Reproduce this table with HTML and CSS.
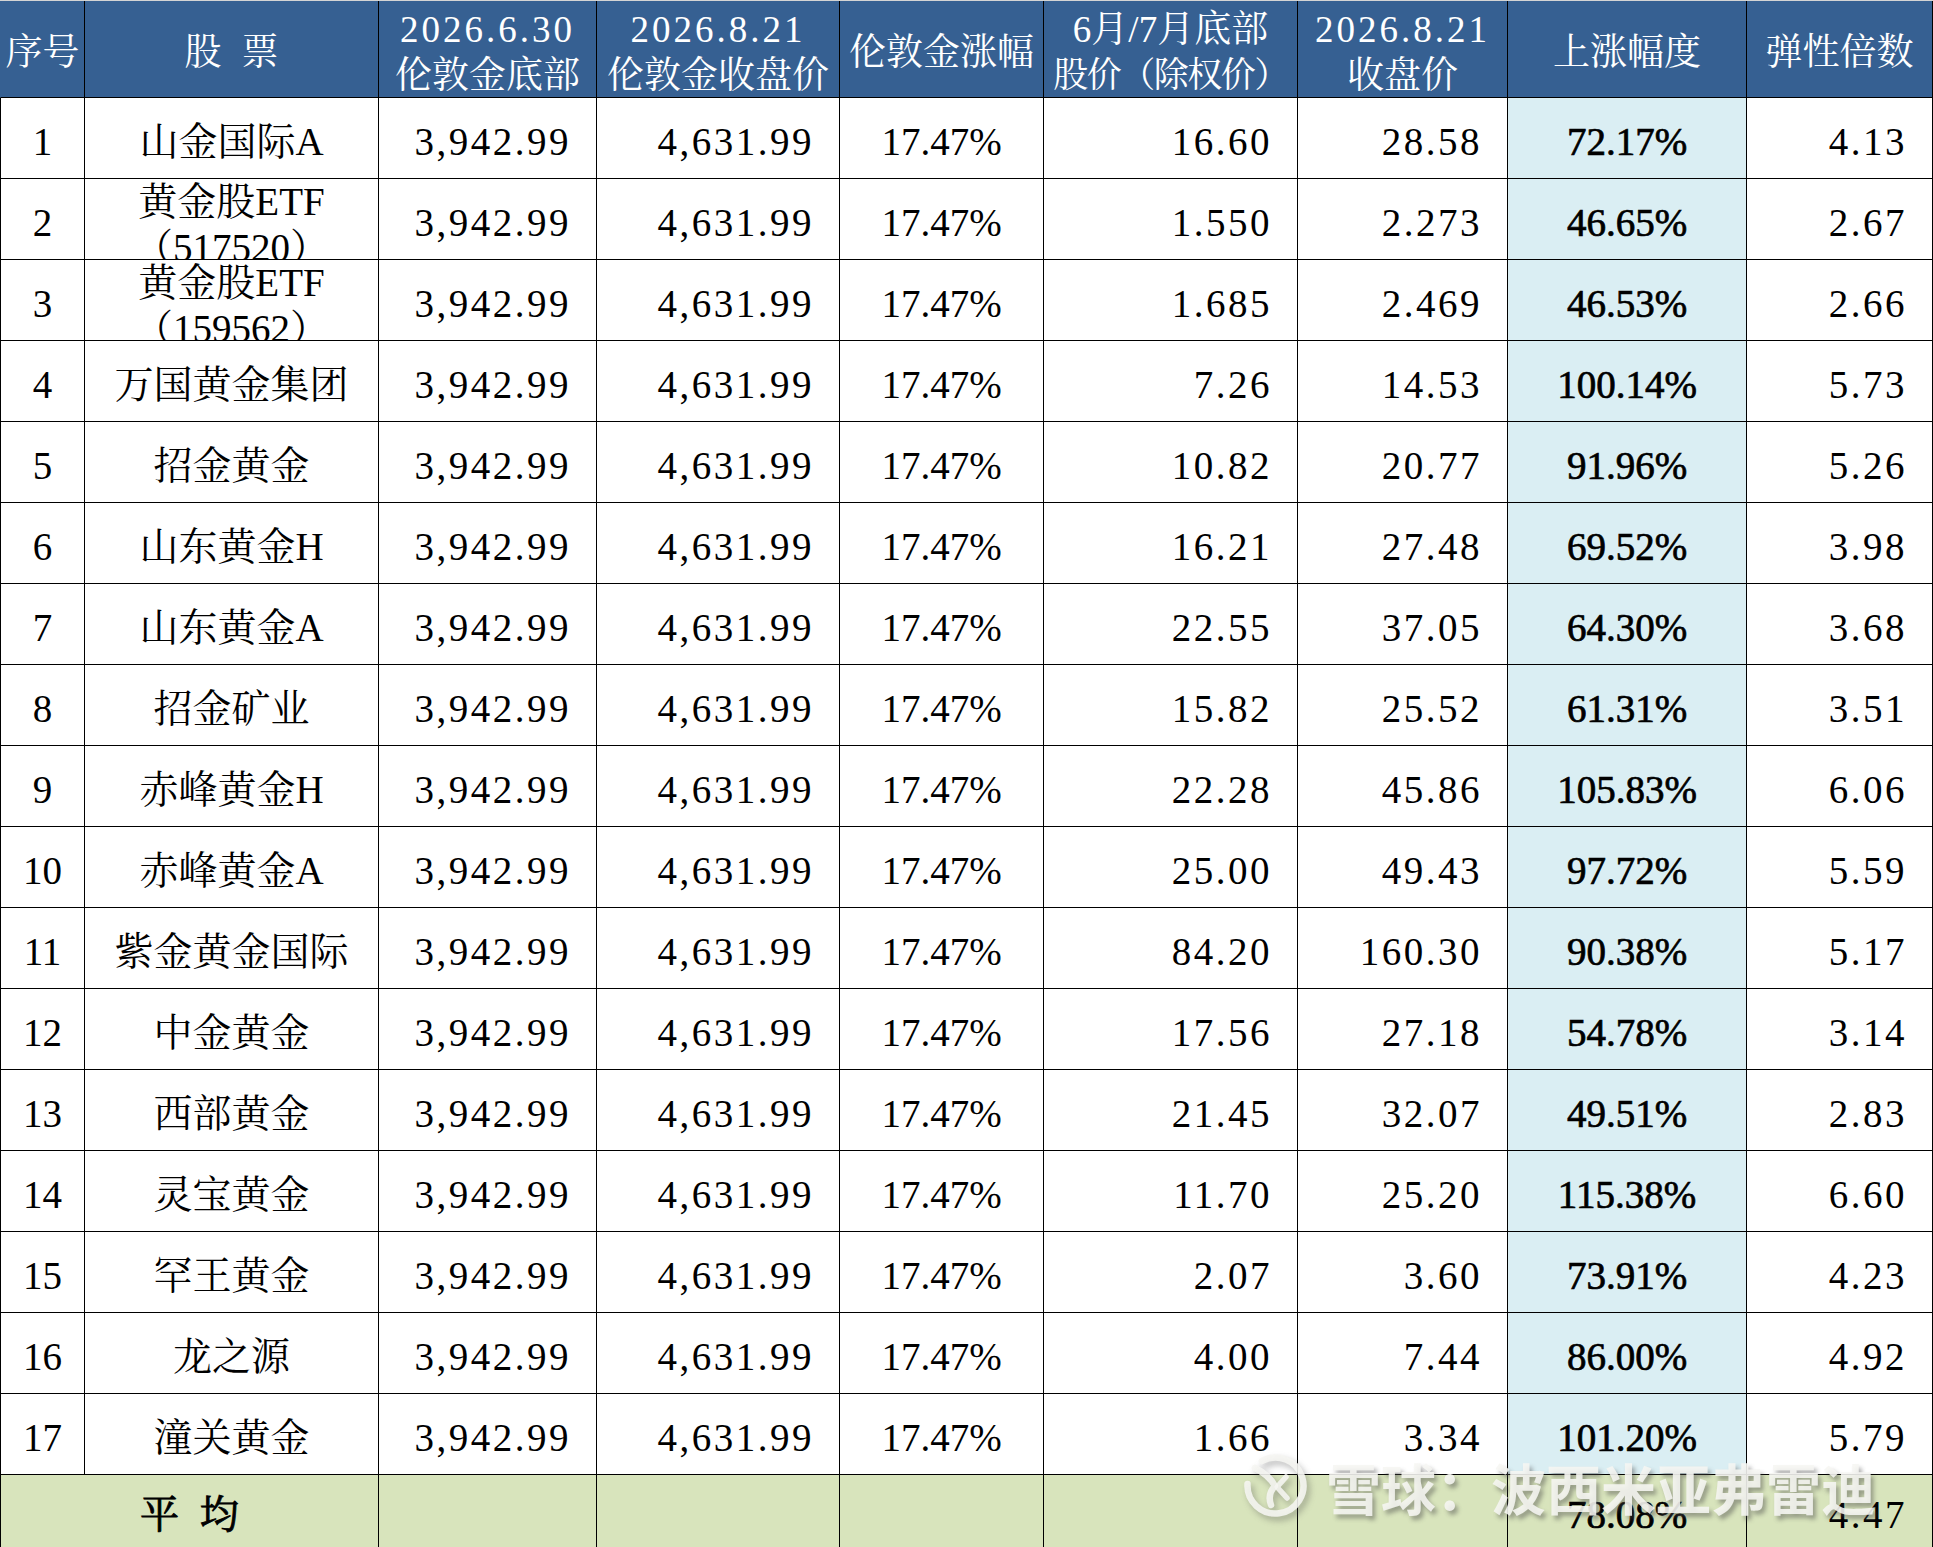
FILE: index.html
```html
<!DOCTYPE html>
<html lang="zh-CN">
<head>
<meta charset="utf-8">
<title>伦敦金与黄金股弹性</title>
<link rel="stylesheet" href="styles.css">
</head>
<body>
<div class="sheet">
  <div class="grid">
    <div class="h">序号</div>
    <div class="h"><span class="sp">股 票</span></div>
    <div class="h two"><span class="d">2026.6.30</span><span>伦敦金底部</span></div>
    <div class="h two"><span class="d">2026.8.21</span><span>伦敦金收盘价</span></div>
    <div class="h">伦敦金涨幅</div>
    <div class="h two"><span>6月/7月底部</span><span class="tight">股价（除权价）</span></div>
    <div class="h two"><span class="d">2026.8.21</span><span>收盘价</span></div>
    <div class="h">上涨幅度</div>
    <div class="h">弹性倍数</div>

    <div class="c idx">1</div><div class="c name">山金国际A</div><div class="c num">3,942.99</div><div class="c num">4,631.99</div><div class="c pct">17.47%</div><div class="c num">16.60</div><div class="c num">28.58</div><div class="c up">72.17%</div><div class="c num">4.13</div>
    <div class="c idx">2</div><div class="c name two"><span>黄金股ETF</span><span>（517520）</span></div><div class="c num">3,942.99</div><div class="c num">4,631.99</div><div class="c pct">17.47%</div><div class="c num">1.550</div><div class="c num">2.273</div><div class="c up">46.65%</div><div class="c num">2.67</div>
    <div class="c idx">3</div><div class="c name two"><span>黄金股ETF</span><span>（159562）</span></div><div class="c num">3,942.99</div><div class="c num">4,631.99</div><div class="c pct">17.47%</div><div class="c num">1.685</div><div class="c num">2.469</div><div class="c up">46.53%</div><div class="c num">2.66</div>
    <div class="c idx">4</div><div class="c name">万国黄金集团</div><div class="c num">3,942.99</div><div class="c num">4,631.99</div><div class="c pct">17.47%</div><div class="c num">7.26</div><div class="c num">14.53</div><div class="c up">100.14%</div><div class="c num">5.73</div>
    <div class="c idx">5</div><div class="c name">招金黄金</div><div class="c num">3,942.99</div><div class="c num">4,631.99</div><div class="c pct">17.47%</div><div class="c num">10.82</div><div class="c num">20.77</div><div class="c up">91.96%</div><div class="c num">5.26</div>
    <div class="c idx">6</div><div class="c name">山东黄金H</div><div class="c num">3,942.99</div><div class="c num">4,631.99</div><div class="c pct">17.47%</div><div class="c num">16.21</div><div class="c num">27.48</div><div class="c up">69.52%</div><div class="c num">3.98</div>
    <div class="c idx">7</div><div class="c name">山东黄金A</div><div class="c num">3,942.99</div><div class="c num">4,631.99</div><div class="c pct">17.47%</div><div class="c num">22.55</div><div class="c num">37.05</div><div class="c up">64.30%</div><div class="c num">3.68</div>
    <div class="c idx">8</div><div class="c name">招金矿业</div><div class="c num">3,942.99</div><div class="c num">4,631.99</div><div class="c pct">17.47%</div><div class="c num">15.82</div><div class="c num">25.52</div><div class="c up">61.31%</div><div class="c num">3.51</div>
    <div class="c idx">9</div><div class="c name">赤峰黄金H</div><div class="c num">3,942.99</div><div class="c num">4,631.99</div><div class="c pct">17.47%</div><div class="c num">22.28</div><div class="c num">45.86</div><div class="c up">105.83%</div><div class="c num">6.06</div>
    <div class="c idx">10</div><div class="c name">赤峰黄金A</div><div class="c num">3,942.99</div><div class="c num">4,631.99</div><div class="c pct">17.47%</div><div class="c num">25.00</div><div class="c num">49.43</div><div class="c up">97.72%</div><div class="c num">5.59</div>
    <div class="c idx">11</div><div class="c name">紫金黄金国际</div><div class="c num">3,942.99</div><div class="c num">4,631.99</div><div class="c pct">17.47%</div><div class="c num">84.20</div><div class="c num">160.30</div><div class="c up">90.38%</div><div class="c num">5.17</div>
    <div class="c idx">12</div><div class="c name">中金黄金</div><div class="c num">3,942.99</div><div class="c num">4,631.99</div><div class="c pct">17.47%</div><div class="c num">17.56</div><div class="c num">27.18</div><div class="c up">54.78%</div><div class="c num">3.14</div>
    <div class="c idx">13</div><div class="c name">西部黄金</div><div class="c num">3,942.99</div><div class="c num">4,631.99</div><div class="c pct">17.47%</div><div class="c num">21.45</div><div class="c num">32.07</div><div class="c up">49.51%</div><div class="c num">2.83</div>
    <div class="c idx">14</div><div class="c name">灵宝黄金</div><div class="c num">3,942.99</div><div class="c num">4,631.99</div><div class="c pct">17.47%</div><div class="c num">11.70</div><div class="c num">25.20</div><div class="c up">115.38%</div><div class="c num">6.60</div>
    <div class="c idx">15</div><div class="c name">罕王黄金</div><div class="c num">3,942.99</div><div class="c num">4,631.99</div><div class="c pct">17.47%</div><div class="c num">2.07</div><div class="c num">3.60</div><div class="c up">73.91%</div><div class="c num">4.23</div>
    <div class="c idx">16</div><div class="c name">龙之源</div><div class="c num">3,942.99</div><div class="c num">4,631.99</div><div class="c pct">17.47%</div><div class="c num">4.00</div><div class="c num">7.44</div><div class="c up">86.00%</div><div class="c num">4.92</div>
    <div class="c idx">17</div><div class="c name">潼关黄金</div><div class="c num">3,942.99</div><div class="c num">4,631.99</div><div class="c pct">17.47%</div><div class="c num">1.66</div><div class="c num">3.34</div><div class="c up">101.20%</div><div class="c num">5.79</div>

    <div class="c avg avg-label"><span class="sp">平 均</span></div>
    <div class="c avg"></div><div class="c avg"></div><div class="c avg"></div><div class="c avg"></div><div class="c avg"></div>
    <div class="c avg up">78.08%</div>
    <div class="c avg num">4.47</div>
  </div>

  <div class="watermark">
    <svg class="wm-logo" width="66" height="66" viewBox="0 0 66 66" aria-hidden="true">
      <path d="M20 8 A28 28 0 1 1 5.5 31" fill="none" stroke="currentColor" stroke-width="6.5" stroke-linecap="round"/>
      <path d="M13 15 Q27 22 33 33 Q25 41 29 52" fill="none" stroke="currentColor" stroke-width="6.5" stroke-linecap="round" stroke-linejoin="round"/>
      <path d="M44 24 L35 34 L45 45" fill="none" stroke="currentColor" stroke-width="5.5" stroke-linecap="round" stroke-linejoin="round"/>
    </svg>
    <span class="wm-text">雪球：波西米亚弗雷迪</span>
  </div>
</div>
</body>
</html>
```

FILE: styles.css
```css
html, body {
  margin: 0;
  padding: 0;
  background: #ffffff;
}

.sheet {
  position: relative;
  width: 1933px;
  height: 1547px;
  overflow: hidden;
}

.grid {
  display: grid;
  grid-template-columns: 85px 294px 218px 243px 204px 254px 210px 239px 186px;
  grid-template-rows: 97px repeat(17, 81px) 73px;
  width: 1933px;
  box-sizing: border-box;
  border-top: 1px solid #d4d4d4;
  font-family: "Liberation Serif", "Noto Serif CJK SC", "Noto Sans CJK SC", serif;
  color: #000;
}

.h,
.c {
  box-sizing: border-box;
  border-right: 1px solid #000;
  border-bottom: 1px solid #000;
  display: flex;
  align-items: center;
  justify-content: center;
  white-space: nowrap;
  overflow: hidden;
}

.h:first-child,
.c.idx,
.avg-label {
  border-left: 1px solid #000;
}

.h:first-child {
  border-left-color: #366092;
}

.h {
  background: #366092;
  color: #ffffff;
  font-size: 37px;
  line-height: 46px;
  padding-top: 7px;
}

.h.two {
  flex-direction: column;
}

.h .d {
  letter-spacing: 3px;
}

.h .tight {
  font-size: 35px;
  letter-spacing: -1.5px;
}

.sp {
  word-spacing: 11px;
}

.c {
  font-size: 39px;
  line-height: 46px;
  padding-top: 8px;
  background: #ffffff;
}

.c.name.two {
  flex-direction: column;
  justify-content: flex-start;
  padding-top: 0;
}

.c.num {
  justify-content: flex-end;
  padding-right: 25px;
  letter-spacing: 2.5px;
}

.c.up {
  background: #daeef3;
  -webkit-text-stroke: 0.7px #000;
}

.c.avg {
  background: #d8e4bc;
}

.avg-label {
  grid-column: span 2;
  -webkit-text-stroke: 0.9px #000;
}

.watermark {
  position: absolute;
  left: 1242px;
  top: 1453px;
  display: flex;
  align-items: center;
  gap: 18px;
  color: rgba(246, 246, 242, 0.88);
  pointer-events: none;
}

.wm-logo {
  display: block;
  filter: drop-shadow(3px 4px 3px rgba(70, 70, 70, 0.4));
}

.wm-text {
  font-family: "Noto Sans CJK SC", "Noto Sans", sans-serif;
  font-size: 55px;
  line-height: 60px;
  font-weight: 700;
  text-shadow: 3px 4px 4px rgba(70, 70, 70, 0.45);
}
```
